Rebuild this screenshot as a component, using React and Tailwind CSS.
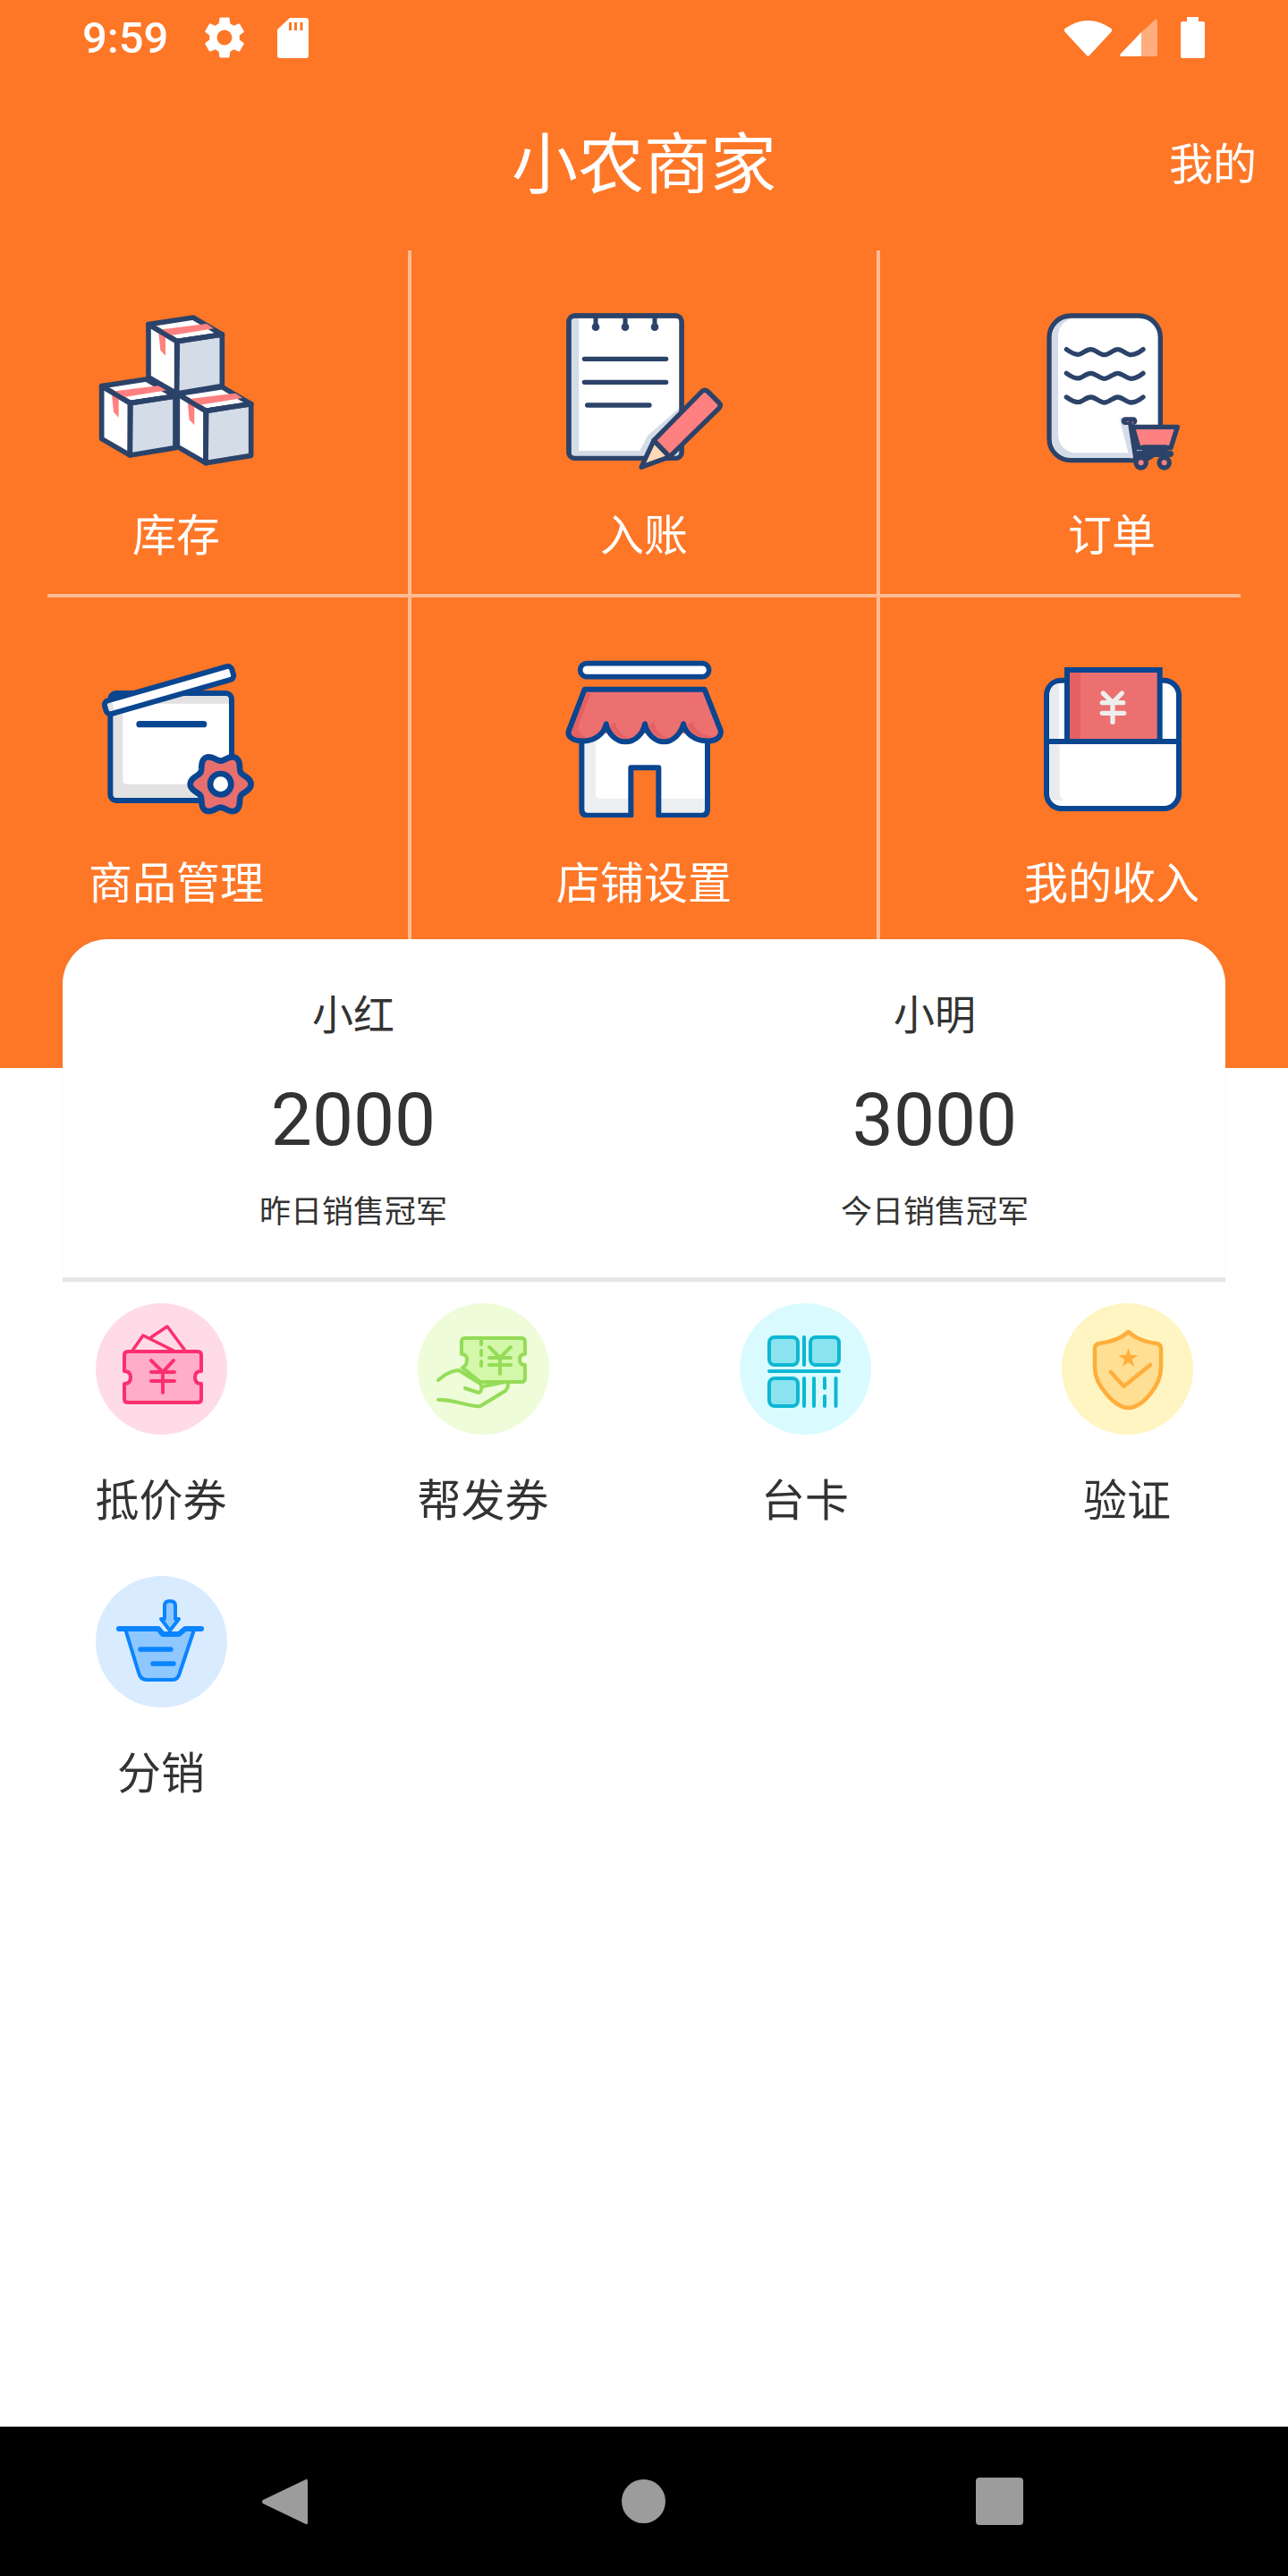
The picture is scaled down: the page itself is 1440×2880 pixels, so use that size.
import React from "react";

const NAVY = "#2c4369";
const BLUE = "#0a4590";

const BoxShape = ({ dx = 0, dy = 0 }) => (
  <g transform={`translate(${dx} ${dy})`} stroke={NAVY} strokeWidth="17" strokeLinejoin="round" strokeLinecap="round">
    <path d="M315 188 L465 165 L562 222 L412 245 Z" fill="#fff" />
    <path d="M315 188 L410 245 L410 420 L315 365 Z" fill="#fff" />
    <path d="M412 245 L562 222 L562 395 L410 420 Z" fill="#d4dce8" />
    <path d="M348 206 L510 186 L534 202 L372 228 L372 293 L355 275 Z" fill="#ff8080" stroke="none" />
    <path d="M315 188 L410 245 L562 222" fill="none" />
  </g>
);

const BoxesIcon = () => (
  <svg viewBox="144 150 531 531" className="w-[177px] h-[177px]">
    <BoxShape dx={-157} dy={207} />
    <BoxShape dx={97} dy={233} />
    <BoxShape />
  </svg>
);

const NotebookIcon = () => (
  <svg viewBox="155 88 531 531" className="w-[177px] h-[177px]" fill="none" strokeLinecap="round" strokeLinejoin="round">
    <rect x="167" y="97" width="378" height="478" rx="20" fill="#fff" stroke={NAVY} strokeWidth="16" />
    <path d="M175 105 H201 V550 H405 L430 500 L538 405 V568 H175 Z" fill="#d4dce8" />
    <path d="M201 105 H538 V405 L430 500 L405 550 H201 Z" fill="#fff" />
    <rect x="167" y="97" width="378" height="478" rx="20" stroke={NAVY} strokeWidth="16" />
    <path d="M257 100 V135 M356 100 V135 M455 100 V135" stroke={NAVY} strokeWidth="15" />
    <circle cx="257" cy="135" r="13" fill={NAVY} />
    <circle cx="356" cy="135" r="13" fill={NAVY} />
    <circle cx="455" cy="135" r="13" fill={NAVY} />
    <path d="M219 242 H493 M219 320 H493 M229 397 H437" stroke={NAVY} strokeWidth="16" />
    <path d="M452 515 L505 570 L410 605 Z" fill="#ffd8b8" stroke={NAVY} strokeWidth="16" />
    <path d="M452 515 L612 352 Q622 342 634 352 L670 388 Q680 398 670 408 L505 570 Z" fill="#ff8080" stroke={NAVY} strokeWidth="16" />
  </svg>
);

const OrderIcon = () => (
  <svg viewBox="106 88 531 531" className="w-[177px] h-[177px]" fill="none" strokeLinecap="round" strokeLinejoin="round">
    <rect x="160" y="97" width="373" height="485" rx="72" fill="#d4dce8" />
    <rect x="190" y="105" width="335" height="452" rx="60" fill="#fff" />
    <rect x="160" y="97" width="373" height="485" rx="72" stroke={NAVY} strokeWidth="16" />
    {[0, 80, 160].map((y) => (
      <path
        key={y}
        transform={`translate(0 ${y})`}
        d="M218 210 C235 222 250 230 262 226 C275 222 285 210 300 210 C315 210 330 228 345 228 C360 228 375 210 390 210 C405 210 420 228 435 228 C450 228 465 218 475 210"
        stroke={NAVY}
        strokeWidth="16"
      />
    ))}
    <path d="M395 440 H450 L470 575 H430 Z" fill="#d4dce8" />
    <path d="M440 470 H590 L568 540 H460 Z" fill="#ff8080" stroke={NAVY} strokeWidth="16" />
    <path d="M415 450 H442" stroke={NAVY} strokeWidth="26" />
    <path d="M418 451 H440 L443 462 Z" fill="#ff8080" />
    <path d="M432 458 L452 585" stroke={NAVY} strokeWidth="16" />
    <path d="M478 540 H550" stroke={NAVY} strokeWidth="20" />
    <path d="M462 560 H566" stroke={NAVY} strokeWidth="22" />
    <circle cx="468" cy="590" r="17" fill="#ff8080" stroke={NAVY} strokeWidth="16" />
    <circle cx="546" cy="590" r="17" fill="#ff8080" stroke={NAVY} strokeWidth="16" />
  </svg>
);

const gearPath = (() => {
  let d = "";
  for (let i = 0; i < 120; i++) {
    const a = (i / 120) * Math.PI * 2;
    const r = 90 + 12 * Math.cos(6 * a);
    d += `${i ? "L" : "M"}${(498 + r * Math.cos(a)).toFixed(1)} ${(470 + r * Math.sin(a)).toFixed(1)} `;
  }
  return d + "Z";
})();

const ProductIcon = () => (
  <svg viewBox="85 51 531 531" className="w-[177px] h-[177px]" fill="none" strokeLinecap="round" strokeLinejoin="round">
    <rect x="128" y="165" width="407" height="360" rx="20" fill="#e2e2e2" />
    <path d="M170 200 H528 V470 H185 Q170 470 170 455 Z" fill="#fff" />
    <rect x="128" y="165" width="407" height="360" rx="20" stroke={BLUE} strokeWidth="18" />
    <path d="M226 269 H441" stroke={BLUE} strokeWidth="22" />
    <g transform="rotate(-16 325 155)">
      <rect x="103" y="132" width="444" height="46" rx="14" fill="#fff" />
      <path d="M117 132 H130 V178 H117 Q103 178 103 164 V146 Q103 132 117 132 Z" fill="#e2e2e2" />
      <path d="M130 170 H547 V164 Q547 178 533 178 H130 Z" fill="#e2e2e2" />
      <rect x="103" y="132" width="444" height="46" rx="14" stroke={BLUE} strokeWidth="18" />
    </g>
    <path d={gearPath} fill="#e96f6f" stroke={BLUE} strokeWidth="20" />
    <circle cx="498" cy="470" r="35" fill="#fff" stroke={BLUE} strokeWidth="20" />
  </svg>
);

const ShopIcon = () => (
  <svg viewBox="95 51 531 531" className="w-[177px] h-[177px]" fill="none" strokeLinecap="round" strokeLinejoin="round">
    <rect x="145" y="65" width="432" height="45" rx="22" fill="#fff" stroke={BLUE} strokeWidth="17" />
    <path d="M150 300 V555 Q150 575 170 575 H315 V415 H408 V575 H552 Q572 575 572 555 V300 Z" fill="#eceef0" />
    <path d="M197 300 H565 V518 H408 V415 H315 V518 H212 Q197 518 197 503 Z" fill="#fff" />
    <path d="M150 320 V555 Q150 575 170 575 H315 V415 H408 V575 H552 Q572 575 572 555 V320" stroke={BLUE} strokeWidth="18" />
    <path
      d="M160 152 H562 L616 290 C620 310 600 328 570 325 C530 325 498 300 491 268 C484 300 455 328 427 328 C395 328 368 300 362 268 C356 300 330 328 297 328 C265 328 238 300 232 268 C225 300 195 328 150 325 C120 325 100 310 107 290 Z"
      fill="#ed7070"
    />
    <path d="M262 262 C268 290 285 310 312 315 C285 322 250 300 246 270 Z M392 262 C398 290 415 310 442 315 C415 322 380 300 376 270 Z M522 262 C528 285 545 305 590 312 C560 322 510 300 506 270 Z" fill="#e56060" />
    <path d="M168 165 H182 L140 270 C138 290 145 305 170 318 C130 322 112 310 114 290 Z" fill="#e56060" />
    <path
      d="M160 152 H562 L616 290 C620 310 600 328 570 325 C530 325 498 300 491 268 C484 300 455 328 427 328 C395 328 368 300 362 268 C356 300 330 328 297 328 C265 328 238 300 232 268 C225 300 195 328 150 325 C120 325 100 310 107 290 Z"
      stroke={BLUE}
      strokeWidth="18"
    />
  </svg>
);

const IncomeIcon = () => (
  <svg viewBox="73 51 531 531" className="w-[177px] h-[177px]" fill="none" strokeLinecap="round" strokeLinejoin="round">
    <rect x="118" y="122" width="444" height="430" rx="50" fill="#fff" stroke={BLUE} strokeWidth="18" />
    <path d="M128 337 H162 V500 Q162 522 180 525 H140 Q128 515 128 500 Z" fill="#e9ebee" />
    <path d="M128 175 Q128 135 160 132 V318 H128 Z" fill="#e9ebee" />
    <rect x="187" y="87" width="311" height="240" fill="#ec7070" stroke={BLUE} strokeWidth="18" strokeLinejoin="miter" />
    <rect x="197" y="97" width="35" height="221" fill="#e56060" />
    <path d="M308 165 L340 197 L371 165 M340 197 V262 M305 197 H375 M305 232 H378" stroke="#eeeeee" strokeWidth="16" />
    <path d="M118 327 H562" stroke={BLUE} strokeWidth="18" strokeLinecap="butt" />
  </svg>
);

const CouponIcon = () => (
  <svg viewBox="0 0 147 147" className="w-full h-full" fill="none" stroke="#fb2f6f" strokeWidth="4" strokeLinecap="round" strokeLinejoin="round">
    <path d="M41 53 L53 36 L87 53 M62 38 L80 26 L100 53" strokeWidth="3.5" />
    <path d="M36 54 H114 Q118 54 118 58 V76 Q111 76 111 83 Q111 90 118 90 V107 Q118 111 114 111 H36 Q32 111 32 107 V90 Q39 90 39 83 Q39 76 32 76 V58 Q32 54 36 54 Z" fill="#ffadc8" />
    <path d="M62 64 L75 77 L87 64 M62 77 H88 M62 87 H88 M75 77 V100" />
  </svg>
);

const HandTicketIcon = () => (
  <svg viewBox="0 0 147 147" className="w-full h-full" fill="none" stroke="#95dc58" strokeWidth="4" strokeLinecap="round" strokeLinejoin="round">
    <path d="M53 39 H116 Q120 39 120 43 V57 Q114 57 114 63 Q114 69 120 69 V84 Q120 88 116 88 H70 L50 72 Q55 70 55 63 Q55 57 49 57 V43 Q49 39 53 39 Z" fill="#d3f8aa" />
    <path d="M71 41 V46 M71 53 V58 M71 65 V70" />
    <path d="M80 49 L92 61 L104 49 M80 61 H104 M80 69 H104 M92 61 V79" />
    <path d="M23 86 C30 80 37 75 46 75 L70 90 C73 96 70 100 68 100 L53 95" />
    <path d="M23 108 C41 107 59 117 70 115 L98 98 C102 93 102 89 98 88 L73 93" />
  </svg>
);

const QrIcon = () => (
  <svg viewBox="0 0 147 147" className="w-full h-full" fill="none" stroke="#0db7d3" strokeWidth="4" strokeLinecap="round" strokeLinejoin="round">
    <rect x="33" y="38" width="32" height="31" rx="6" fill="#8ae3ee" />
    <rect x="79" y="38" width="32" height="31" rx="6" fill="#8ae3ee" />
    <rect x="33" y="84" width="32" height="31" rx="6" fill="#8ae3ee" />
    <path d="M72 38 V69 M33 76 H111 M72 84 V115 M83 84 V115 M95 84 V95 M95 104 V115 M107.5 84 V115" strokeWidth="4" />
  </svg>
);

const ShieldIcon = () => (
  <svg viewBox="0 0 147 147" className="w-full h-full" fill="none" stroke="#ffae3c" strokeWidth="4.5" strokeLinecap="round" strokeLinejoin="round">
    <path d="M74.6 32 C68 38 58 43 42 45 Q37 46 37 51 V72 C37 92 60 117 74.6 117 C90 117 111 92 111 72 V51 Q111 46 106 45 C90 43 81 38 74.6 32 Z" fill="#ffdf94" />
    <path d="M74.5 50 L77 58 L85.5 58 L78.7 63 L81.3 71 L74.5 66 L67.7 71 L70.3 63 L63.5 58 L72 58 Z" fill="#ffae3c" stroke="none" />
    <path d="M55 77 L69.5 93 L99 69" />
  </svg>
);

const BasketIcon = () => (
  <svg viewBox="0 0 147 147" className="w-full h-full" fill="none" stroke="#0a84ff" strokeWidth="4" strokeLinecap="round" strokeLinejoin="round">
    <path d="M33 59 L48 108 Q50 116 57 116 H86 Q92 116 94 108 L110 60 L100 59 L93 65 H75 L70 59 Z" fill="#8fc8ff" />
    <path d="M26 59 H70 L75 65 H93 L100 59 H118" strokeWidth="6" />
    <path d="M50 82 H84 M64 98 H87" strokeWidth="5.5" />
    <path d="M77 48 V33 Q77 28 83 28 Q89 28 89 33 V48 H93 L83 61 L73 48 Z" fill="#8fc8ff" />
  </svg>
);

const grid = [
  {
    wrap: "w-[460px] border-r-4 border-white/50 pr-[62px]",
    line: "ml-[53px] -mr-[62px]",
    top: { label: "库存", Icon: BoxesIcon },
    bottom: { label: "商品管理", Icon: ProductIcon },
  },
  {
    wrap: "w-[524px] border-r-4 border-white/50",
    line: "",
    top: { label: "入账", Icon: NotebookIcon },
    bottom: { label: "店铺设置", Icon: ShopIcon },
  },
  {
    wrap: "w-[456px] pl-[62px]",
    line: "mr-[53px] -ml-[62px]",
    top: { label: "订单", Icon: OrderIcon },
    bottom: { label: "我的收入", Icon: IncomeIcon },
  },
];

const tools = [
  { label: "抵价券", bg: "bg-[#ffdbe8]", Icon: CouponIcon },
  { label: "帮发券", bg: "bg-[#eefcd9]", Icon: HandTicketIcon },
  { label: "台卡", bg: "bg-[#d9fbff]", Icon: QrIcon },
  { label: "验证", bg: "bg-[#fff5c2]", Icon: ShieldIcon },
  { label: "分销", bg: "bg-[#d9ebff]", Icon: BasketIcon },
];

const champs = [
  { name: "小红", value: "2000", note: "昨日销售冠军" },
  { name: "小明", value: "3000", note: "今日销售冠军" },
];

const StatusBar = () => (
  <div className="flex items-center h-[84px] pl-[92px] pr-[93px] text-white">
    <span className="text-[49px] leading-none font-medium">9:59</span>
    <svg viewBox="0 0 24 24" fill="#fff" className="w-[56px] h-[56px] ml-[35px]">
      <path d="M19.14 12.94c.04-.3.06-.61.06-.94 0-.32-.02-.64-.07-.94l2.03-1.58c.18-.14.23-.41.12-.61l-1.92-3.32c-.12-.22-.37-.29-.59-.22l-2.39.96c-.5-.38-1.03-.7-1.62-.94L14.4 2.81c-.04-.24-.24-.41-.48-.41h-3.84c-.24 0-.43.17-.47.41L9.25 5.35c-.59.24-1.13.57-1.62.94l-2.39-.96c-.22-.08-.47 0-.59.22L2.74 8.87c-.12.21-.08.47.12.61l2.03 1.58c-.05.3-.09.63-.09.94s.02.64.07.94l-2.03 1.58c-.18.14-.23.41-.12.61l1.92 3.32c.12.22.37.29.59.22l2.39-.96c.5.38 1.03.7 1.62.94l.36 2.54c.05.24.24.41.48.41h3.84c.24 0 .44-.17.47-.41l.36-2.54c.59-.24 1.13-.56 1.62-.94l2.39.96c.22.08.47 0 .59-.22l1.92-3.32c.12-.22.07-.47-.12-.61l-2.01-1.58zM12 15.6c-1.98 0-3.6-1.62-3.6-3.6s1.62-3.6 3.6-3.6 3.6 1.62 3.6 3.6-1.62 3.6-3.6 3.6z" />
    </svg>
    <svg viewBox="0 0 35 45" className="w-[35px] h-[45px] ml-[31px]">
      <path fill="#fff" fillRule="evenodd" d="M14 0 H32 Q35 0 35 3 V42 Q35 45 32 45 H3 Q0 45 0 42 V13 Z M13 5 V14 H16 V5 Z M19 5 V14 H22 V5 Z M25.5 5 V14 H28.5 V5 Z" />
    </svg>
    <div className="flex-1" />
    <svg viewBox="0 0 53 42" className="w-[53px] h-[42px]">
      <path fill="#fff" d="M0.5 11 Q26.5 -7 52.5 11 Q53.5 12 53 14 L28 41 Q26.5 42.5 25 41 L0 14 Q-0.5 12 0.5 11 Z" />
    </svg>
    <svg viewBox="0 0 42 42" className="w-[42px] h-[42px] ml-[9px]">
      <path fill="#fff" fillOpacity="0.4" d="M24 15 L40 0.5 Q42 0 42 2 V40 Q42 42 40 42 H24 Z" />
      <path fill="#fff" d="M24 15 V42 H2 Q-1 42 1 39 Z" />
    </svg>
    <svg viewBox="0 0 27 46" className="w-[27px] h-[46px] ml-[26px]">
      <path fill="#fff" d="M7 0 H20 V5 H25 Q27 5 27 7 V44 Q27 46 25 46 H2 Q0 46 0 44 V7 Q0 5 2 5 H7 Z" />
    </svg>
  </div>
);

const App = () => {
  return (
    <div className="min-h-[2880px] flex flex-col bg-white font-['Roboto','Noto_Sans_CJK_SC',sans-serif] text-[#333]">
      <div className="bg-[#fd7727] text-white pb-[144px]">
        <StatusBar />
        <div className="grid grid-cols-[1fr_auto_1fr] items-center h-[196px] px-[35px] pt-[5px]">
          <span />
          <h1 className="text-[74px] leading-none font-normal">小农商家</h1>
          <span className="text-[49px] leading-none text-right">我的</span>
        </div>
        <div className="flex">
          {grid.map((col) => (
            <div key={col.top.label} className={col.wrap}>
              <div className="h-[384px] pt-[70px] flex flex-col items-center">
                <col.top.Icon />
                <span className="mt-[43px] text-[49px] leading-[60px]">{col.top.label}</span>
              </div>
              <div className={`h-[4px] bg-white/50 ${col.line}`} />
              <div className="h-[382px] pt-[69px] flex flex-col items-center">
                <col.bottom.Icon />
                <span className="mt-[45px] text-[49px] leading-[60px]">{col.bottom.label}</span>
              </div>
            </div>
          ))}
        </div>
      </div>

      <div className="relative -mt-[144px] mx-[70px] bg-white rounded-t-[50px] border-b-[5px] border-[#e6e6e6] shadow-[0_0_2px_rgba(0,0,0,0.08)] grid grid-cols-2 pt-[55px] pb-[47px] text-center">
        {champs.map((c) => (
          <div key={c.name} className="flex flex-col">
            <span className="text-[46px] leading-[60px]">{c.name}</span>
            <span className="mt-[37px] text-[82px] leading-[100px]">{c.value}</span>
            <span className="mt-[29px] text-[35px] leading-[50px]">{c.note}</span>
          </div>
        ))}
      </div>

      <div className="grid grid-cols-4 pt-[24px] flex-1 content-start">
        {tools.map((t) => (
          <div key={t.label} className="flex flex-col items-center mb-[8px]">
            <div className={`w-[147px] h-[147px] rounded-full ${t.bg}`}>
              <t.Icon />
            </div>
            <span className="text-[49px] leading-[150px]">{t.label}</span>
          </div>
        ))}
      </div>

      <div className="h-[167px] bg-black flex items-center">
        <div className="w-[1440px] h-[56px] flex justify-center pr-[4px]">
          <div className="flex items-center">
            <svg viewBox="0 0 52 56" className="w-[52px] h-[56px] mr-[351px]">
              <path fill="#9c9c9c" d="M50 3 Q52 2 52 5 V51 Q52 54 50 53 L2 30 Q0 28 2 26 Z" />
            </svg>
            <div className="w-[49px] h-[49px] rounded-full bg-[#9c9c9c]" />
            <div className="w-[53px] h-[53px] rounded-[4px] bg-[#9c9c9c] ml-[347px]" />
          </div>
        </div>
      </div>
    </div>
  );
};

export default App;
